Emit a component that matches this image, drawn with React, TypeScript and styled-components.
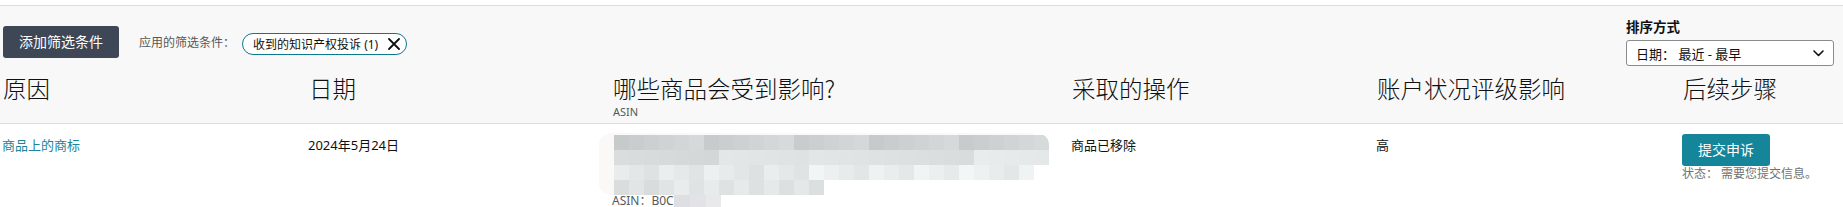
import React from "react";
import styled, { createGlobalStyle } from "styled-components";

const GlobalStyle = createGlobalStyle`
  html, body { margin: 0; padding: 0; background: #ffffff; }
  body {
    font-family: "Noto Sans", "Noto Sans CJK SC", sans-serif;
    color: #0f1111;
    -webkit-font-smoothing: antialiased;
  }
`;

const COLS = "306px 304px 459px 305px 306px 1fr";

const Page = styled.div`
  padding-top: 5px;
  width: 1843px;
`;

const FilterPanel = styled.div`
  background: #f8f8f8;
  border-top: 1px solid #dddddd;
  border-bottom: 1px solid #dddddd;
`;

const Toolbar = styled.div`
  display: flex;
  justify-content: space-between;
  align-items: flex-start;
  padding: 12px 9px 0 3px;
`;

const FilterGroup = styled.div`
  display: flex;
  align-items: center;
  margin-top: 8px;
`;

const ActionButton = styled.button<{ $tone: "dark" | "teal" }>`
  box-sizing: border-box;
  height: 32px;
  padding: 0 16px;
  border: none;
  border-radius: 3px;
  background: ${(p) => (p.$tone === "dark" ? "#3e4756" : "#15869a")};
  color: #ffffff;
  font-family: "Noto Sans", "Noto Sans CJK SC", sans-serif;
  font-size: 14px;
  line-height: 32px;
  white-space: nowrap;
  cursor: pointer;
`;

const AppliedLabel = styled.span`
  margin-left: 20px;
  font-size: 12px;
  color: #565959;
  white-space: nowrap;
`;

const Chip = styled.div`
  box-sizing: border-box;
  display: inline-flex;
  align-items: center;
  gap: 10px;
  height: 22px;
  margin-left: 7px;
  margin-top: 3px;
  padding: 0 6px 0 10px;
  border: 1.5px solid #0b7a8c;
  border-radius: 11px;
  background: #ffffff;
  font-size: 12px;
  color: #0f1111;
  white-space: nowrap;
`;

const SortGroup = styled.div`
  display: flex;
  flex-direction: column;
  gap: 4px;
  width: 208px;
`;

const SortLabel = styled.div`
  font-size: 13.5px;
  font-weight: 700;
  line-height: 18px;
  color: #0f1111;
`;

const SortSelect = styled.div`
  box-sizing: border-box;
  display: flex;
  align-items: center;
  justify-content: space-between;
  height: 26px;
  padding: 0 9px;
  border: 1px solid #888c8c;
  border-radius: 3px;
  background: #ffffff;
  font-size: 13px;
  color: #0f1111;
`;

const HeadRow = styled.div`
  display: grid;
  grid-template-columns: ${COLS};
  padding: 7px 0 4px 3px;
`;

const HeadCell = styled.div`
  display: flex;
  flex-direction: column;
`;

const HeadTitle = styled.div`
  font-family: "Noto Sans CJK SC", "Noto Sans", sans-serif;
  font-size: 23.5px;
  font-weight: 300;
  line-height: 30px;
  color: #0f1111;
  white-space: nowrap;
`;

const HeadSub = styled.div`
  margin-top: 2px;
  font-size: 11px;
  line-height: 14px;
  color: #565959;
`;

const BodyRow = styled.div`
  display: grid;
  grid-template-columns: ${COLS};
  padding: 10px 0 0 2px;
  background: #ffffff;
`;

const Cell = styled.div<{ $link?: boolean }>`
  font-size: 13px;
  line-height: 22px;
  color: ${(p) => (p.$link ? "#1a8597" : "#0f1111")};
  white-space: nowrap;
`;

const ProductCell = styled.div`
  display: flex;
  flex-direction: column;
  margin-top: -1px;
`;

const MosaicBox = styled.svg`
  display: block;
  margin-left: -13px;
`;

const AsinLine = styled.div`
  display: flex;
  align-items: center;
  height: 12px;
  font-size: 12px;
  line-height: 12px;
  color: #565959;
`;

const AsinBlur = styled.svg`
  display: block;
`;

const NextCell = styled.div`
  display: flex;
  flex-direction: column;
  align-items: flex-start;
`;

const StatusText = styled.div`
  font-size: 12px;
  line-height: 16px;
  color: #6f7373;
  white-space: nowrap;
`;

const CloseIcon = () => (
  <svg width="12" height="12" viewBox="0 0 12 12">
    <path d="M1 1 L11 11 M11 1 L1 11" stroke="#0f1111" strokeWidth="1.8" strokeLinecap="round" />
  </svg>
);

const Chevron = () => (
  <svg width="11" height="7" viewBox="0 0 11 7">
    <path d="M1 1 L5.5 5.5 L10 1" fill="none" stroke="#0f1111" strokeWidth="1.6" strokeLinecap="round" strokeLinejoin="round" />
  </svg>
);

const shade = (i: number, j: number) => {
  const bases = [210, 223, 232, 228];
  let base = bases[j];
  if (j === 2 && i > 12) base = 238;
  if (j === 1 && i > 12) base = 228;
  const v = ((i * 37 + j * 91 + i * j * 13) % 17) - 8;
  const g = Math.max(196, Math.min(246, base + v));
  return `rgb(${g - 4}, ${g}, ${g + 1})`;
};

const rowLengths = [29, 29, 28, 14];

const Mosaic = () => {
  const rects: React.ReactNode[] = [];
  rowLengths.forEach((len, j) => {
    for (let i = 0; i < len; i++) {
      rects.push(
        <rect key={`${i}-${j}`} x={15 + i * 15} y={2 + j * 15} width={15} height={15} fill={shade(i, j)} />
      );
    }
  });
  return (
    <MosaicBox width="450" height="62" viewBox="0 0 450 62">
      <defs>
        <clipPath id="mosaicClip">
          <rect x="0" y="0" width="450" height="62" rx="12" />
        </clipPath>
      </defs>
      <g clipPath="url(#mosaicClip)">
        <rect x="0" y="0" width="435" height="47" fill="#fbf9f8" />
        <rect x="0" y="47" width="225" height="15" fill="#fbf9f8" />
        {rects}
      </g>
    </MosaicBox>
  );
};

export default function App() {
  return (
    <Page>
      <GlobalStyle />
      <FilterPanel>
        <Toolbar>
          <FilterGroup>
            <ActionButton $tone="dark">添加筛选条件</ActionButton>
            <AppliedLabel>应用的筛选条件：</AppliedLabel>
            <Chip>
              <span>收到的知识产权投诉 (1)</span>
              <CloseIcon />
            </Chip>
          </FilterGroup>
          <SortGroup>
            <SortLabel>排序方式</SortLabel>
            <SortSelect>
              <span>日期： 最近 - 最早</span>
              <Chevron />
            </SortSelect>
          </SortGroup>
        </Toolbar>
        <HeadRow>
          <HeadCell>
            <HeadTitle>原因</HeadTitle>
          </HeadCell>
          <HeadCell>
            <HeadTitle>日期</HeadTitle>
          </HeadCell>
          <HeadCell>
            <HeadTitle>哪些商品会受到影响?</HeadTitle>
            <HeadSub>ASIN</HeadSub>
          </HeadCell>
          <HeadCell>
            <HeadTitle>采取的操作</HeadTitle>
          </HeadCell>
          <HeadCell>
            <HeadTitle>账户状况评级影响</HeadTitle>
          </HeadCell>
          <HeadCell>
            <HeadTitle>后续步骤</HeadTitle>
          </HeadCell>
        </HeadRow>
      </FilterPanel>
      <BodyRow>
        <Cell $link>商品上的商标</Cell>
        <Cell>2024年5月24日</Cell>
        <ProductCell>
          <Mosaic />
          <AsinLine>
            <span>ASIN：B0C</span>
            <AsinBlur width="47" height="12" viewBox="0 0 47 12">
              <rect x="0" y="0" width="16" height="12" fill="#dedfe2" />
              <rect x="16" y="0" width="16" height="12" fill="#e2e2e7" />
              <rect x="32" y="0" width="15" height="12" fill="#e9e9ec" />
            </AsinBlur>
          </AsinLine>
        </ProductCell>
        <Cell>商品已移除</Cell>
        <Cell>高</Cell>
        <NextCell>
          <ActionButton $tone="teal">提交申诉</ActionButton>
          <StatusText>状态： 需要您提交信息。</StatusText>
        </NextCell>
      </BodyRow>
    </Page>
  );
}
